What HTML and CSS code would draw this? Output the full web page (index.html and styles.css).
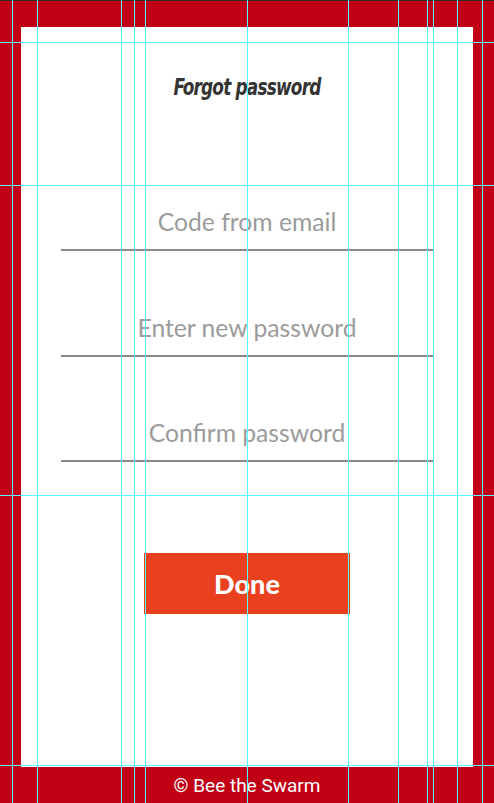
FILE: index.html
```html
<!DOCTYPE html>
<html>
<head>
<meta charset="utf-8">
<link rel="stylesheet" href="styles.css">
</head>
<body>
<div class="topbar"></div>
<div class="frame">
  <div class="card">
    <h1 class="title">Forgot password</h1>
    <form class="form">
      <div class="field"><span class="placeholder">Code from email</span></div>
      <div class="field"><span class="placeholder">Enter new password</span></div>
      <div class="field"><span class="placeholder">Confirm password</span></div>
      <button type="button" class="done">Done</button>
    </form>
  </div>
</div>
<div class="footer">© Bee the Swarm</div>

<div class="guides">
  <div class="v v1"></div><div class="v v2"></div><div class="v v3"></div><div class="v v4"></div>
  <div class="v v5"></div><div class="v v6"></div><div class="v v7"></div><div class="v v8"></div>
  <div class="v v9"></div><div class="v v10"></div><div class="v v11"></div><div class="v v12"></div>
  <div class="h h1"></div><div class="h h2"></div><div class="h h3"></div><div class="h h4"></div>
</div>
</body>
</html>
```

FILE: styles.css
```css
html, body {
  margin: 0;
  padding: 0;
}
body {
  width: 494px;
  height: 803px;
  background: #c10015;
  position: relative;
  overflow: hidden;
  font-family: "Lato", "Open Sans", sans-serif;
}
.topbar {
  height: 1px;
  background: #2a2a2a;
}
.frame {
  padding: 26px 21px 0 21px;
}
.card {
  background: #ffffff;
  height: 740px;
  display: flex;
  flex-direction: column;
  align-items: center;
  padding: 0 40px;
  box-sizing: border-box;
}
.title {
  margin: 46px 0 0 0;
  font-family: "DejaVu Sans Condensed", "DejaVu Sans", sans-serif;
  font-style: italic;
  font-weight: bold;
  font-size: 23.5px;
  line-height: 28px;
  color: #333333;
  letter-spacing: -1px;
  transform: scaleX(0.8);
}
.form {
  width: 100%;
  display: flex;
  flex-direction: column;
  align-items: center;
  margin-top: 106px;
}
.field {
  width: 100%;
  height: 42px;
  border-bottom: 2px solid #8a8a8a;
  text-align: center;
  margin-bottom: 61.5px;
}
.field:last-of-type {
  margin-bottom: 0;
}
.placeholder {
  font-family: "Lato", sans-serif;
  font-size: 24.7px;
  line-height: 30px;
  color: #9b9b9b;
}
.done {
  margin-top: 91px;
  width: 206px;
  height: 61px;
  border: none;
  background: #e9411f;
  color: #ffffff;
  font-family: "Lato", sans-serif;
  font-weight: 900;
  font-size: 27px;
  padding: 0;
}
.footer {
  height: 36px;
  display: flex;
  align-items: center;
  justify-content: center;
  font-family: "Roboto", sans-serif;
  font-size: 19px;
  color: #ffffff;
  padding-top: 1px;
  box-sizing: border-box;
}
.guides {
  position: absolute;
  left: 0;
  top: 0;
  width: 494px;
  height: 803px;
  pointer-events: none;
}
.v {
  position: absolute;
  top: 0;
  width: 1px;
  height: 803px;
  background: #55ffff;
}
.h {
  position: absolute;
  left: 0;
  height: 1px;
  width: 494px;
  background: #55ffff;
}
.v1 { left: 12px; }
.v2 { left: 37px; }
.v3 { left: 121px; }
.v4 { left: 134px; }
.v5 { left: 145px; }
.v6 { left: 247px; }
.v7 { left: 348px; }
.v8 { left: 398px; }
.v9 { left: 427px; }
.v10 { left: 433px; }
.v11 { left: 457px; }
.v12 { left: 482px; }
.h1 { top: 42px; }
.h2 { top: 185px; }
.h3 { top: 495px; }
.h4 { top: 765px; }
```
